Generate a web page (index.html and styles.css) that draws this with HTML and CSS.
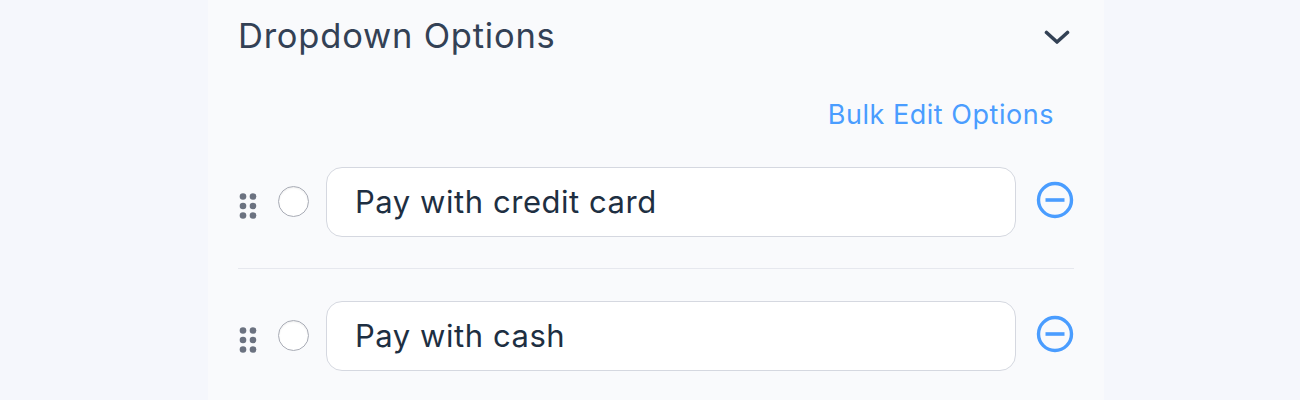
FILE: index.html
```html
<!DOCTYPE html>
<html lang="en">
<head>
    <meta charset="UTF-8" />
    <title>Dropdown Options</title>
    <link rel="stylesheet" href="styles.css">
</head>
<body>
    <div class="panel">
        <div class="panel-header">
            <h2 class="panel-title">Dropdown Options</h2>
            <svg class="chevron" width="26" height="16" viewBox="0 0 26 16" fill="none">
                <path d="M2.500 3.500l10.500 9.500L23.500 3.500" stroke="#334155" stroke-width="3.600" stroke-linecap="round" stroke-linejoin="round"/>
            </svg>
        </div>
        <div class="bulk-row">
            <a class="bulk-link">Bulk Edit Options</a>
        </div>
        <div class="option-row">
            <svg class="drag" width="18" height="28" viewBox="0 0 18 28">
                <g fill="#6b7280">
                    <circle cx="4" cy="4.500" r="3.300"/><circle cx="14" cy="4.500" r="3.300"/>
                    <circle cx="4" cy="14" r="3.300"/><circle cx="14" cy="14" r="3.300"/>
                    <circle cx="4" cy="23.500" r="3.300"/><circle cx="14" cy="23.500" r="3.300"/>
                </g>
            </svg>
            <span class="radio"></span>
            <div class="option-input">Pay with credit card</div>
            <svg class="remove" width="38" height="38" viewBox="0 0 38 38" fill="none">
                <circle cx="19" cy="19" r="16.500" stroke="#4a9dff" stroke-width="3.400"/>
                <path d="M9.500 19h19" stroke="#4a9dff" stroke-width="3.600"/>
            </svg>
        </div>
        <div class="divider"></div>
        <div class="option-row">
            <svg class="drag" width="18" height="28" viewBox="0 0 18 28">
                <g fill="#6b7280">
                    <circle cx="4" cy="4.500" r="3.300"/><circle cx="14" cy="4.500" r="3.300"/>
                    <circle cx="4" cy="14" r="3.300"/><circle cx="14" cy="14" r="3.300"/>
                    <circle cx="4" cy="23.500" r="3.300"/><circle cx="14" cy="23.500" r="3.300"/>
                </g>
            </svg>
            <span class="radio"></span>
            <div class="option-input">Pay with cash</div>
            <svg class="remove" width="38" height="38" viewBox="0 0 38 38" fill="none">
                <circle cx="19" cy="19" r="16.500" stroke="#4a9dff" stroke-width="3.400"/>
                <path d="M9.500 19h19" stroke="#4a9dff" stroke-width="3.600"/>
            </svg>
        </div>
    </div>
</body>
</html>
```

FILE: styles.css
```css
html, body {
    height: 100%;
}
body {
    margin: 0;
    background-color: #f5f7fc;
    font-family: 'Inter', 'Liberation Sans', sans-serif;
    overflow: hidden;
}
.panel {
    width: 836px;
    height: 400px;
    margin-left: 208px;
    padding: 0 30px;
    background-color: #f9fafc;
}
.panel-header {
    display: flex;
    justify-content: space-between;
    align-items: center;
    height: 71px;
}
.panel-title {
    margin: 0;
    font-size: 34.500px;
    font-weight: 400;
    letter-spacing: 0.780px;
    color: #334155;
}
.chevron {
    margin-right: 4px;
    margin-top: 2px;
}
.bulk-row {
    display: flex;
    justify-content: flex-end;
    height: 96px;
    padding-right: 20px;
    box-sizing: border-box;
    padding-top: 27px;
}
.bulk-link {
    font-size: 27px;
    line-height: 34px;
    letter-spacing: 0.530px;
    color: #4a9dff;
}
.option-row {
    display: flex;
    align-items: center;
    height: 70px;
}
.drag {
    margin-left: 1px;
    margin-top: 7px;
    flex-shrink: 0;
}
.radio {
    box-sizing: border-box;
    width: 31px;
    height: 31px;
    margin-left: 21px;
    margin-bottom: 2px;
    border: 1.500px solid #a9acb6;
    border-radius: 50%;
    background-color: #fff;
    box-shadow: inset 0 1px 2px rgba(0, 0, 0, 0.08);
    flex-shrink: 0;
}
.option-input {
    box-sizing: border-box;
    width: 690px;
    height: 70px;
    margin-left: 17px;
    padding-left: 28px;
    border: 1px solid #d5d8e0;
    border-radius: 16px;
    background-color: #fff;
    font-size: 31px;
    line-height: 68px;
    letter-spacing: 0.550px;
    color: #1e2f42;
}
.remove {
    margin-left: 20px;
    margin-bottom: 4px;
    flex-shrink: 0;
}
.divider {
    height: 1px;
    margin: 31px 0 32px;
    background-color: #e6e8ee;
}
```
